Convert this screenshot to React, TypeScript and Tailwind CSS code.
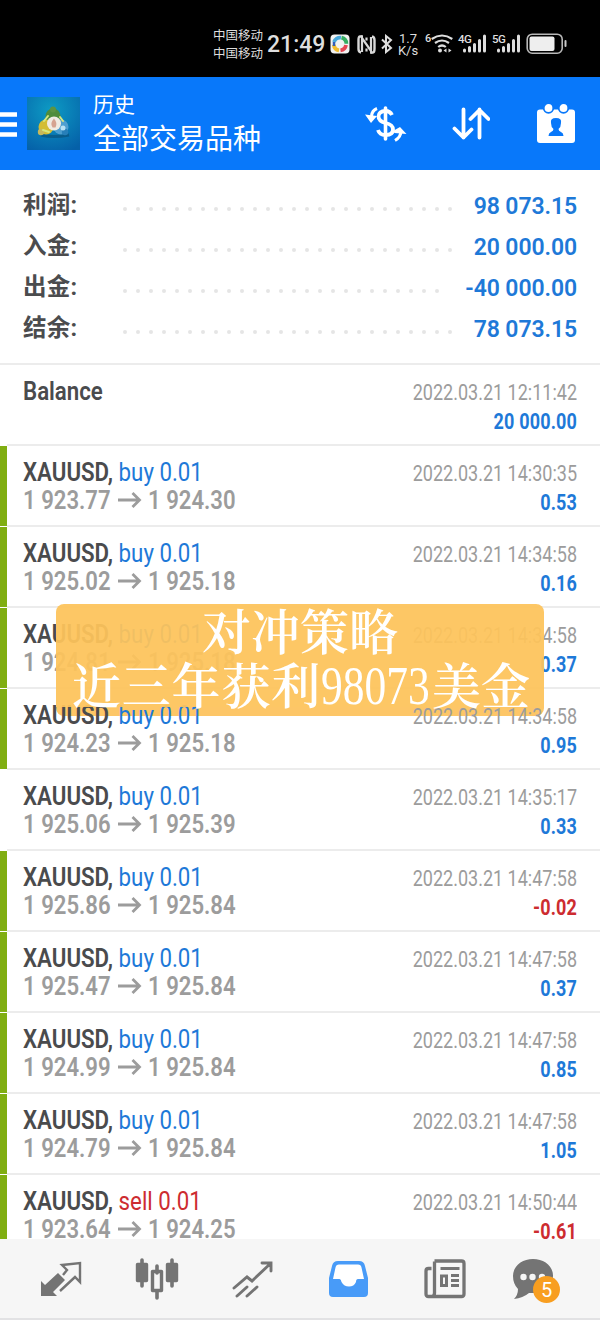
import type { ReactNode } from 'react'

type Deal = {
  side: 'buy' | 'sell'
  open: string
  close: string
  time: string
  profit: string
  marked: boolean
}

const summary = [
  { label: '利润:', value: '98 073.15', dots: 26 },
  { label: '入金:', value: '20 000.00', dots: 26 },
  { label: '出金:', value: '-40 000.00', dots: 25 },
  { label: '结余:', value: '78 073.15', dots: 26 },
]

const deals: Deal[] = [
  { side: 'buy', open: '1 923.77', close: '1 924.30', time: '14:30:35', profit: '0.53', marked: true },
  { side: 'buy', open: '1 925.02', close: '1 925.18', time: '14:34:58', profit: '0.16', marked: true },
  { side: 'buy', open: '1 924.81', close: '1 925.18', time: '14:34:58', profit: '0.37', marked: true },
  { side: 'buy', open: '1 924.23', close: '1 925.18', time: '14:34:58', profit: '0.95', marked: true },
  { side: 'buy', open: '1 925.06', close: '1 925.39', time: '14:35:17', profit: '0.33', marked: false },
  { side: 'buy', open: '1 925.86', close: '1 925.84', time: '14:47:58', profit: '-0.02', marked: true },
  { side: 'buy', open: '1 925.47', close: '1 925.84', time: '14:47:58', profit: '0.37', marked: true },
  { side: 'buy', open: '1 924.99', close: '1 925.84', time: '14:47:58', profit: '0.85', marked: true },
  { side: 'buy', open: '1 924.79', close: '1 925.84', time: '14:47:58', profit: '1.05', marked: true },
  { side: 'sell', open: '1 923.64', close: '1 924.25', time: '14:50:44', profit: '-0.61', marked: true },
]

function SignalBars() {
  return (
    <svg width="25" height="20" viewBox="0 0 25 20" fill="none" stroke="#dedede" strokeWidth="3" strokeLinecap="round">
      <path d="M2.5 16v1M7.5 13.5V17M12.5 10.5V17M17.5 6.5V17M22.5 2V17" />
    </svg>
  )
}

function StatusBar() {
  return (
    <div className="flex h-[77px] shrink-0 items-start bg-black pl-[213px] pt-[27px] text-[#dedede]">
      <div className="w-[52px] whitespace-nowrap text-[12.5px] leading-[17.5px]">
        <p>中国移动</p>
        <p>中国移动</p>
      </div>
      <p className="ml-[2px] w-[62px] whitespace-nowrap text-[23px] font-medium leading-[36px]">21:49</p>
      <svg className="mt-[7px] ml-[1px]" width="20" height="20" viewBox="0 0 20 20" fill="none">
        <rect x="0.5" y="0.5" width="19" height="19" rx="4" fill="#f2f2f2" />
        <g strokeWidth="3.8">
          <path d="M4 8a6.4 6.4 0 0 1 7-4.4" stroke="#48a8dc" />
          <path d="M11.5 3.7a6.4 6.4 0 0 1 4.9 6" stroke="#35ad62" />
          <path d="M16 11a6.4 6.4 0 0 1-5.5 5.3" stroke="#e64655" />
          <path d="M9 16.3a6.4 6.4 0 0 1-5.2-5.6" stroke="#f1bd30" />
          <path d="M4 12V8" stroke="#335eb9" strokeWidth="2.5" />
        </g>
      </svg>
      <svg className="mt-[8px] ml-[7px]" width="19" height="19" viewBox="0 0 19 19" fill="none" stroke="#d8d8d8">
        <path d="M6 1.5H3Q1.5 1.5 1.5 5v9q0 3 2.5 3.5M13 17.5h3q1.5 0 1.5-4V5q0-3-2.5-3.5" strokeWidth="2.4" />
        <path d="M5 17V3l9 13V2M9.5 2.5v3M9.5 13.500v3" strokeWidth="2.2" />
      </svg>
      <svg className="mt-[7px] ml-[3px]" width="16" height="20" viewBox="0 0 16 20" fill="none" stroke="#dedede" strokeWidth="2">
        <path d="m3 5.5 9 8.5-5 4V2l5 4-9 8.5" />
      </svg>
      <div className="mt-[6px] ml-[1px] w-[24px] text-center text-[13px] leading-[12px]">
        <p>1.7</p>
        <p>K/s</p>
      </div>
      <p className="mt-[5px] ml-[5px] w-[6px] text-[11px] font-medium leading-[14px]">6</p>
      <svg className="mt-[7px]" width="23" height="20" viewBox="0 0 23 20" fill="none" stroke="#dedede" strokeWidth="2.2">
        <path d="M0.7 5q10.3-7 20.6 0M4 9q7-5 14 0M7.2 13q3.8-3 7.6 0" />
        <circle cx="9" cy="16.5" r="2" fill="#dedede" stroke="none" />
        <path d="m15.5 14.5-3 2 3 2zM17.5 14.5l3 2-3 2z" fill="#dedede" stroke="none" />
      </svg>
      <div className="relative ml-[8px] h-7 w-[26px] pt-[7px]">
        <span className="absolute -left-1 top-[5px] text-[11.5px] font-medium leading-[14px] tracking-[-0.5px]">4G</span>
        <SignalBars />
      </div>
      <div className="relative ml-[8px] h-7 w-[26px] pt-[7px]">
        <span className="absolute -left-1 top-[5px] text-[11.5px] font-medium leading-[14px] tracking-[-0.5px]">5G</span>
        <SignalBars />
      </div>
      <svg className="mt-[6px] ml-[4px]" width="42" height="22" viewBox="0 0 42 22" fill="none">
        <rect x="1.2" y="1.2" width="35" height="19" rx="5" stroke="#b8b8b8" strokeWidth="1.6" />
        <rect x="3.5" y="3.5" width="25" height="14.5" rx="2" fill="#eee" />
        <path d="M39.5 8v5" stroke="#c8c8c8" strokeWidth="2" strokeLinecap="round" />
      </svg>
    </div>
  )
}

function AppLogo() {
  return (
    <svg width="53" height="53" viewBox="0 0 53 53">
      <defs>
        <radialGradient id="sea" cx="0.45" cy="0.25" r="0.85">
          <stop offset="0" stopColor="#0d9bc4" />
          <stop offset="1" stopColor="#0560a8" />
        </radialGradient>
      </defs>
      <rect width="53" height="53" fill="url(#sea)" />
      <path d="M14 38q12 3 28 0" stroke="#0a4467" strokeWidth="3" opacity="0.5" />
      <circle cx="26" cy="19" r="7.5" fill="#4f8c3c" />
      <circle cx="26" cy="12.5" r="3" fill="#5c9443" />
      <circle cx="19" cy="30" r="7.5" fill="#d3bd35" />
      <circle cx="14" cy="35" r="3.2" fill="#c7b85b" />
      <circle cx="34" cy="30" r="7.5" fill="#4e9fd0" />
      <circle cx="38" cy="35" r="3.2" fill="#277fb9" />
      <path d="M17 24l4-5M33 20l3 4M16 33l6 2" stroke="#d6e67e" strokeWidth="2" strokeLinecap="round" />
      <circle cx="36" cy="31" r="2.5" fill="#b9e2f5" />
      <circle cx="27" cy="26.5" r="7" fill="#f0ebe3" />
      <path d="M27 21.5q4 5 1.5 9h-3q-3-4 1.5-9" fill="#d6a391" />
    </svg>
  )
}

function Header() {
  return (
    <header className="flex h-[93px] shrink-0 items-start bg-[#0878fa] text-white">
      <svg className="mt-[34px]" width="17" height="28" viewBox="0 0 17 28" stroke="#fff" strokeWidth="4.4">
        <path d="M0 3.5h17M0 13.5h17M0 23.5h17" />
      </svg>
      <div className="ml-[10px] mt-[20px]">
        <AppLogo />
      </div>
      <div className="ml-[13px] mt-[16px] w-[258px] whitespace-nowrap">
        <p className="text-[21px] leading-[24px]">历史</p>
        <h1 className="mt-[6px] text-[28px] leading-[34px]">全部交易品种</h1>
      </div>
      <svg className="ml-[14px] mt-[28px]" width="42" height="38" viewBox="0 0 42 38" fill="none" stroke="#fff">
        <path d="M27 10q-2-4-6.5-4-7 0-7 5.5 0 4.500 7 6.5 7.5 1.5 7.5 6.5 0 5.5-7.5 5.5-6 0-7.5-5" strokeWidth="3.8" />
        <path d="M20.5 3v31" strokeWidth="3.6" strokeLinecap="round" />
        <path d="M12 3.5Q7 5.5 6.5 11" strokeWidth="3" />
        <path d="M0 9.5l12 1.500-6 7zM28 26l7-4 6.5 7-12-1z" fill="#fff" stroke="none" />
        <path d="M36 26q0 6-6 9.5" strokeWidth="3" />
      </svg>
      <svg className="ml-[45px] mt-[30px]" width="38" height="34" viewBox="0 0 38 34" fill="none" stroke="#fff" strokeWidth="3.8" strokeLinecap="round" strokeLinejoin="round">
        <path d="M11.5 2.5v28M2.5 21.5l9 9 8-8M27.5 30.5v-28M18.5 12l9-9 9 9" />
      </svg>
      <svg className="ml-[45px] mt-[24px]" width="42" height="43" viewBox="0 0 42 43">
        <path d="M5 8.5h32q3 0 3 3v27.5q0 3-3 3H5q-3 0-3-3V11.5q0-3 3-3Z" fill="#fff" />
        <circle cx="13.5" cy="7" r="4.8" fill="#fff" stroke="#0878fa" strokeWidth="1.8" />
        <circle cx="28.5" cy="7" r="4.8" fill="#fff" stroke="#0878fa" strokeWidth="1.8" />
        <path d="M16 22q-1-5 5-5t5 5q0 4-2.5 6 0 2 2.5 3 2.5 1 2.5 4h-15q0-3 2.5-4 2.5-1 2.5-3-2.5-2-2.5-6Z" fill="#0878fa" />
      </svg>
    </header>
  )
}

function Summary() {
  return (
    <section className="flex h-[195px] shrink-0 flex-col border-b-2 border-[#ececec] pl-[23px] pr-[23px] pt-[15px]">
      {summary.map((row) => (
        <div key={row.label} className="flex h-[41px] items-center">
          <p className="w-[100px] text-[23.5px] font-bold leading-none tracking-[0.2px] text-[#4b4c4e]">{row.label}</p>
          <div className="flex gap-[9px] pt-[7px]">
            {Array.from({ length: row.dots }, (_, i) => (
              <i key={i} className="size-[4px] rounded-full bg-[#e5e5e5]" />
            ))}
          </div>
          <p className="ml-auto whitespace-nowrap pt-px text-[23px] font-semibold leading-none tracking-[-0.1px] text-[#1e79d8]">{row.value}</p>
        </div>
      ))}
    </section>
  )
}

function RightColumn({ time, profit }: { time: string; profit: string }) {
  return (
    <div className="flex w-[210px] shrink-0 origin-right scale-x-[0.818] flex-col items-end whitespace-nowrap pt-[13px]">
      <p className="text-[22px] leading-[30px] text-[#9c9c9c]">2022.03.21 {time}</p>
      <p className={`text-[22px] font-bold leading-[27px] tracking-[0.2px] ${profit.startsWith('-') ? 'text-[#cd2c30]' : 'text-[#1e79d8]'}`}>
        {profit}
      </p>
    </div>
  )
}

function Row({ marked, children }: { marked: boolean; children: ReactNode }) {
  return (
    <li className="flex h-[81px] shrink-0">
      <div className={`mb-px w-[7px] shrink-0 ${marked ? 'bg-[#80ae12]' : ''}`} />
      <div className="flex min-w-0 flex-1 justify-between border-b-2 border-[#ececec] pl-[16px] pr-[23px]">{children}</div>
    </li>
  )
}

function DealRow({ deal }: { deal: Deal }) {
  return (
    <Row marked={deal.marked}>
      <div className="w-[240px] whitespace-nowrap pt-[11px]">
        <p className="origin-left scale-x-[0.856] text-[26px] leading-[30px]">
          <span className="font-semibold text-[#4a4b4d]">XAUUSD, </span>
          <span className={deal.side === 'buy' ? 'text-[#1e79d8]' : 'text-[#cd2c30]'}>{deal.side} 0.01</span>
        </p>
        <div className="flex text-[25px] font-semibold leading-[27px] text-[#9c9c9c]">
          <span className="w-[95px] origin-left scale-x-[0.885]">{deal.open}</span>
          <svg className="mt-[4px]" width="24" height="18" viewBox="0 0 24 18" fill="none" stroke="#9c9c9c" strokeWidth="2.8">
            <path d="M0 9h21M14.5 2l7 7-7 7" />
          </svg>
          <span className="ml-[6px] origin-left scale-x-[0.885]">{deal.close}</span>
        </div>
      </div>
      <RightColumn time={deal.time} profit={deal.profit} />
    </Row>
  )
}

function Caption() {
  return (
    <>
      <div className="absolute left-[56px] top-[604px] z-20 h-[103px] w-[488px] rounded-t-[8px] bg-[#fdc35b]/94" />
      <div className="absolute left-[56px] top-[707px] h-[9px] w-[488px] rounded-b-[8px] bg-[#fdc667]" />
      <div className="absolute left-[58px] top-[604px] z-20 flex h-[112px] w-[488px] flex-col whitespace-nowrap font-['Noto_Serif_CJK_SC','Liberation_Serif','Noto_Sans_CJK_SC',serif] text-[49px] font-semibold text-white">
        <p className="h-[54px] pl-[144px] leading-[50px]">对冲策略</p>
        <div className="flex h-[56px] pl-[14px] leading-[51px]">
          <span className="w-[249px] tracking-[0.8px]">近三年获利</span>
          <span className="w-[111px] origin-left scale-x-[0.79] font-['Liberation_Serif',serif] text-[55px] font-normal leading-[56px]">98073</span>
          <span>美金</span>
        </div>
      </div>
    </>
  )
}

function TabBar() {
  return (
    <nav className="flex h-[81px] shrink-0 items-start border-b-2 border-[#e2e2e4] bg-[#f6f6f6] pt-[18px] pl-[38px]">
      <svg width="96" height="44" viewBox="0 0 96 44" fill="none" stroke="#747474">
        <path d="M3 39V24l4 4 13-12 7 7-12 12 4 4Z" fill="#747474" stroke="none" />
        <path d="m22 34 15-14 5 5V6L24 8l5 5-4 5" strokeWidth="2.4" />
      </svg>
      <svg width="96" height="44" viewBox="0 0 96 44" fill="none" stroke="#747474" strokeWidth="3.6" strokeLinecap="round">
        <path d="M8 3v26M38 3v26M23 9v7M23 35v6" />
        <path d="M3.5 7.5h9v16h-9zM33.5 7.5h9v16h-9z" fill="#747474" strokeWidth="3.4" strokeLinejoin="round" />
        <path d="M18.5 14.5h9v19h-9z" strokeWidth="3.4" strokeLinejoin="round" />
      </svg>
      <svg width="96" height="44" viewBox="0 0 96 44" fill="none" stroke="#747474" strokeWidth="2.9" strokeLinecap="round">
        <path d="m4 31 13-11 5 4L41 6M32 6h9v8" />
        <path d="m7 39 10-9M17 39l10-9" />
      </svg>
      <svg width="96" height="44" viewBox="0 0 96 44">
        <path d="M12 4h21q5 0 6 5l3 12v15q0 4-4 4H7q-4 0-4-4V21l3-12q1-5 6-5Z" fill="#489bf8" />
        <path d="M13 7.5h19q3 0 3.5 3L38 22h-6q-2 0-2 3-2 4.5-7 4.5T15.5 25q-.5-3-2-3H7l2.5-11.5q.5-3 3.5-3Z" fill="#fff" />
      </svg>
      <svg width="89" height="44" viewBox="0 0 89 44" fill="none" stroke="#747474" strokeWidth="3.3">
        <path d="M12.5 4h27q2.500 0 2.500 2.500V37q0 2.500-2.500 2.500H6.500Q4 39.500 4 37V14q0-2.500 2.500-2.500h3M12.500 4.500V36q0 3-2.500 3.500" />
        <path d="M18.500 11.500h19M29 18.500h8M29 23.500h8M29 28.500h8" strokeWidth="2.800" />
        <path d="M19.500 19h5v9.500h-5z" strokeWidth="3" />
      </svg>
      <div className="relative">
        <svg width="44" height="44" viewBox="0 0 44 44">
          <path d="M22 2c11 0 20 7 20 16.5S33 36 22 36h-4Q12 41 3 42q4-4 4-10-5-5-5-13C2 9 11 2 22 2Z" fill="#747474" />
          <circle cx="12.5" cy="20" r="3.2" fill="#f6f6f6" />
          <circle cx="21.5" cy="20" r="3.2" fill="#f6f6f6" />
          <circle cx="31" cy="20" r="3.2" fill="#f6f6f6" />
        </svg>
        <span className="absolute left-[22px] top-[19px] flex size-[27px] items-center justify-center rounded-full bg-[#f89e20] text-[20px] text-white">
          5
        </span>
      </div>
    </nav>
  )
}

export default function App() {
  return (
    <main className="relative flex h-[1320px] w-[600px] flex-col overflow-hidden bg-white font-['Roboto','Noto_Sans_CJK_SC',sans-serif]">
      <StatusBar />
      <Header />
      <Summary />
      <ul className="relative z-10 flex min-h-0 flex-1 flex-col overflow-hidden">
        <Row marked={false}>
          <p className="w-[240px] origin-left scale-x-[0.856] pt-[11px] text-[26px] font-semibold leading-[30px] text-[#4a4b4d]">Balance</p>
          <RightColumn time="12:11:42" profit="20 000.00" />
        </Row>
        {deals.map((deal) => (
          <DealRow key={deal.open} deal={deal} />
        ))}
      </ul>
      <TabBar />
      <Caption />
    </main>
  )
}
